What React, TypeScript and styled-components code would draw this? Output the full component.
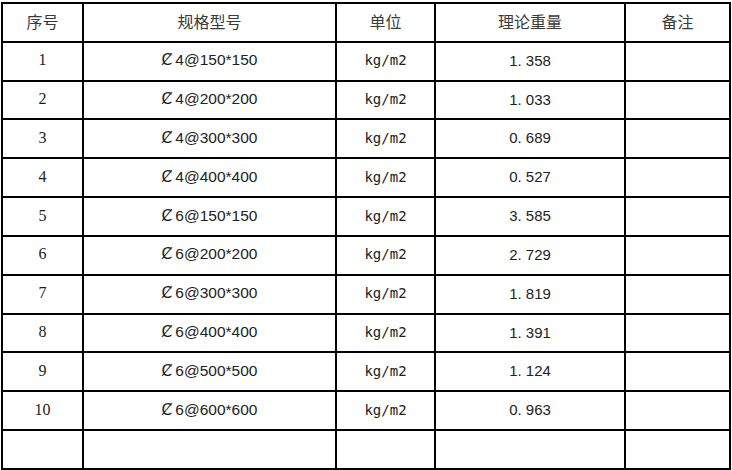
import React from 'react';
import styled, { createGlobalStyle } from 'styled-components';

const GlobalStyle = createGlobalStyle`
  html, body {
    margin: 0;
    padding: 0;
    background: #fff;
  }
`

const Sheet = styled.div`
  margin: 2px 0 0 1px;
  width: 730px;
  height: 468px;
  box-sizing: border-box;
  display: grid;
  grid-template-columns: 79px 251px 97px 188px 103px;
  grid-template-rows: repeat(12, 1fr);
  gap: 2px;
  padding: 2px;
  background: #000;
`

type Kind = 'head' | 'index' | 'spec' | 'unit' | 'weight' | 'blank'

const fonts: Record<Kind, string> = {
  head: `font-family: "Noto Sans CJK SC", sans-serif; font-size: 16px; color: #3a3a3a;`,
  index: `font-family: "Liberation Serif", serif; font-size: 16px; color: #222;`,
  spec: `font-family: "Liberation Sans", "DejaVu Sans", sans-serif; font-size: 15.5px; color: #222;`,
  unit: `font-family: "DejaVu Sans Mono", monospace; font-size: 14px; color: #222;`,
  weight: `font-family: "Liberation Sans", sans-serif; font-size: 15px; color: #222;`,
  blank: ``,
}

const Cell = styled.div<{ $kind: Kind }>`
  background: #fff;
  display: flex;
  align-items: center;
  justify-content: center;
  padding-bottom: 2px;
  box-sizing: border-box;
  white-space: pre;
  ${(p) => fonts[p.$kind]}
`

const Bar = styled.span`
  font-family: "DejaVu Sans", sans-serif;
  margin-right: 3px;
  color: #222;
`

const rows = [
  ['4', '150', '1. 358'],
  ['4', '200', '1. 033'],
  ['4', '300', '0. 689'],
  ['4', '400', '0. 527'],
  ['6', '150', '3. 585'],
  ['6', '200', '2. 729'],
  ['6', '300', '1. 819'],
  ['6', '400', '1. 391'],
  ['6', '500', '1. 124'],
  ['6', '600', '0. 963'],
]

export default function App() {
  return (
    <>
      <GlobalStyle />
      <Sheet>
        <Cell $kind="head">序号</Cell>
        <Cell $kind="head">规格型号</Cell>
        <Cell $kind="head">单位</Cell>
        <Cell $kind="head">理论重量</Cell>
        <Cell $kind="head">备注</Cell>
        {rows.map(([dia, step, weight], i) => (
          <React.Fragment key={i}>
            <Cell $kind="index">{i + 1}</Cell>
            <Cell $kind="spec"><Bar>Ȼ</Bar>{`${dia}@${step}*${step}`}</Cell>
            <Cell $kind="unit">kg/m2</Cell>
            <Cell $kind="weight">{weight}</Cell>
            <Cell $kind="blank" />
          </React.Fragment>
        ))}
        <Cell $kind="blank" />
        <Cell $kind="blank" />
        <Cell $kind="blank" />
        <Cell $kind="blank" />
        <Cell $kind="blank" />
      </Sheet>
    </>
  )
}
